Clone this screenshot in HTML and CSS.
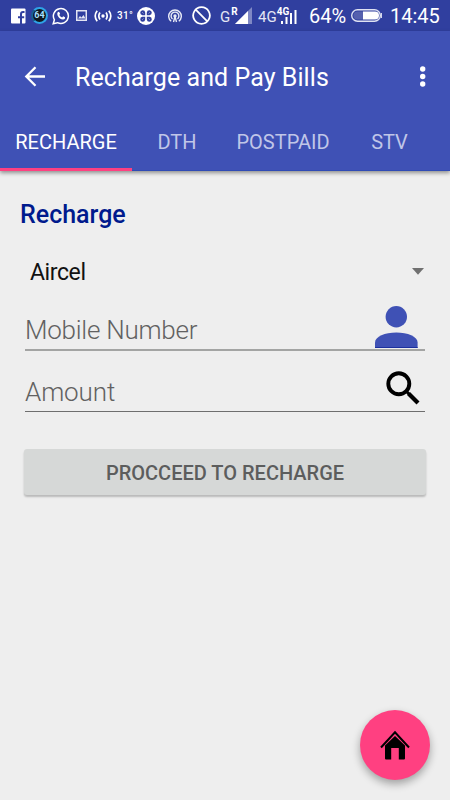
FILE: index.html
```html
<!DOCTYPE html>
<html lang="en">
<head>
    <meta charset="UTF-8">
    <meta name="viewport" content="width=device-width, initial-scale=1.0">
    <title>Recharge and Pay Bills</title>
    <link rel="stylesheet" href="styles.css">
</head>
<body>
    <div class="status-bar">
        <div class="notifications">
            <svg class="facebook" width="15" height="16" viewBox="0 0 15 16">
                <rect y="0.5" width="14.5" height="15" rx="1" fill="#fff"/>
                <path d="M13.5 4H12q-2 0-2 2v10M7 9.3h6.2" fill="none" stroke="#303f9f" stroke-width="2"/>
            </svg>
            <div class="level">64</div>
            <svg class="whatsapp" width="18" height="18" viewBox="0 0 18 18">
                <path d="M1.2 16.8l1.2-4A7.5 7.5 0 1 1 5.5 15.7z" fill="none" stroke="#fff" stroke-width="1.5"/>
                <path d="M5.7 5.2q1-1 1.6 0l.8 1.5-.8 1.2q.8 1.7 2.8 2.5l1.1-1.1 1.8 1q.5 2-2 2.3-3.5-.5-5.4-4.2-.8-2 .1-3.2z" fill="#fff"/>
            </svg>
            <svg class="picture" width="11" height="11" viewBox="0 0 11 11">
                <rect x="0.75" y="0.75" width="9.5" height="9.5" fill="none" stroke="#e3e5f3" stroke-width="1.5"/>
                <path d="M2 8.5l2-2.5 1.5 1.5L7.5 5 9.5 8.5z" fill="#e3e5f3"/>
            </svg>
            <svg class="broadcast" width="18" height="12" viewBox="0 0 18 12">
                <circle cx="9" cy="6" r="1.7" fill="#fff"/>
                <path d="M3.2.8q-4 5.2 0 10.4M6 2.5q-2.4 3.5 0 7M14.8.8q4 5.2 0 10.4M12 2.5q2.4 3.5 0 7" fill="none" stroke="#fff" stroke-width="1.7"/>
            </svg>
            <div class="temperature">31°</div>
            <svg class="clover" width="18" height="18" viewBox="0 0 18 18">
                <circle cx="9" cy="9" r="9" fill="#fff"/>
                <path d="M8.2 8.2H5.4A2.5 2.5 0 1 1 8.2 5.4zM9.8 8.2V5.4A2.5 2.5 0 1 1 12.6 8.2zM8.2 9.8v2.8A2.5 2.5 0 1 1 5.4 9.8zM9.8 9.8h2.8A2.5 2.5 0 1 1 9.8 12.6z" fill="#303f9f"/>
                <path d="M5.2 5.2l1.3 1.3M12.8 5.2l-1.3 1.3M5.2 12.8l1.3-1.3M12.8 12.8l-1.3-1.3" stroke="#8e97cd"/>
            </svg>
        </div>
        <svg class="hotspot" width="14" height="14" viewBox="0 0 14 14">
            <g fill="none" stroke="#e8eaf6" stroke-width="1.4">
                <path d="M3.2 12.3a6.3 6.3 0 1 1 7.6 0M4.5 10a3.9 3.9 0 1 1 5 0"/>
                <path d="M7 7.5L5.5 13M7 7.5L8.5 13"/>
            </g>
            <circle cx="7" cy="7" r="1.7" fill="#e8eaf6"/>
        </svg>
        <svg class="blocked" width="19" height="19" viewBox="0 0 19 19">
            <path d="M9.5 1.2a8.3 8.3 0 1 0 .01 0M3.7 3.7l11.6 11.6" fill="none" stroke="#fff" stroke-width="1.8"/>
        </svg>
        <div class="network">G<sup>R</sup></div>
        <svg class="signal" width="17" height="17" viewBox="0 0 17 17">
            <path d="M17 0v17H0z" fill="#7f88c4"/>
            <path d="M13 4v13H0z" fill="#fff"/>
        </svg>
        <div class="network network-4g">4G<sup>4G</sup></div>
        <svg class="bars" width="16" height="14" viewBox="0 0 16 14">
            <path d="M0 11h2v3H0zM4.5 7h2v7h-2zM9 3h2v11H9zM13.5 0h2v14h-2z" fill="#fff"/>
        </svg>
        <div class="percent">64%</div>
        <svg class="battery" width="31" height="13" viewBox="0 0 31 13">
            <rect x="0.7" y="0.7" width="28.6" height="11.6" rx="5.8" fill="none" stroke="#dfe2f2" stroke-width="1.4"/>
            <path d="M12 2.5h12a4 4 0 0 1 0 8H12z" fill="#fff"/>
            <path d="M12 2.5H6.5a4 4 0 0 0 0 8H12z" fill="#5560ae"/>
            <path d="M30.3 4v5" stroke="#fff"/>
        </svg>
        <div class="clock">14:45</div>
    </div>

    <header class="app-bar">
        <div class="toolbar">
            <svg class="back" width="22" height="22" viewBox="0 0 22 22">
                <path d="M21 10.5H2.5M11.5 1.3L2.3 10.5l9.2 9.2" fill="none" stroke="#fff" stroke-width="2.3"/>
            </svg>
            <h1 class="title">Recharge and Pay Bills</h1>
            <svg class="overflow" width="6" height="22" viewBox="0 0 6 22" fill="#fff">
                <circle cx="2.7" cy="3" r="2.7"/>
                <circle cx="2.7" cy="10.5" r="2.7"/>
                <circle cx="2.7" cy="18" r="2.7"/>
            </svg>
        </div>
        <nav class="tabs">
            <a class="tab tab-recharge active">RECHARGE</a>
            <a class="tab tab-dth">DTH</a>
            <a class="tab tab-postpaid">POSTPAID</a>
            <a class="tab tab-stv">STV</a>
        </nav>
    </header>

    <main class="content">
        <h2 class="heading">Recharge</h2>
        <div class="operator">
            <span>Aircel</span>
            <svg width="12" height="7" viewBox="0 0 12 7"><path d="M0 0h12L6 6.8z" fill="#707070"/></svg>
        </div>
        <div class="field field-mobile">
            <span class="hint hint-mobile">Mobile Number</span>
            <svg class="person" width="43" height="43" viewBox="0 0 43 43" fill="#3f51b5">
                <circle cx="21.3" cy="10.7" r="10.7"/>
                <path d="M0 42v-5.5C0 30.500 10 26.500 21.300 26.500s21.300 4 21.300 10v5.500z"/>
                <path d="M0 41h42.600v1H0z" fill="#1b309f"/>
            </svg>
        </div>
        <div class="field field-amount">
            <span class="hint hint-amount">Amount</span>
            <svg class="search" width="34" height="34" viewBox="0 0 34 34" fill="none" stroke="#000">
                <circle cx="12.8" cy="12.7" r="10.5" stroke-width="3.9"/>
                <path d="M20 20l3.500 3.500" stroke-width="3"/>
                <path d="M22.500 22.500l9.500 9.500" stroke-width="4.2"/>
            </svg>
        </div>
        <button class="submit">PROCCEED TO RECHARGE</button>
    </main>

    <button class="home">
        <svg width="30" height="30" viewBox="0 0 30 30">
            <path d="M1 17.5L15 2.3l14 15.2" fill="none" stroke="#000" stroke-width="2"/>
            <path d="M5 15.5L15 6l10 9.500v13q0 1-1 1h-5.200v-11.500h-7.600v11.500H6q-1 0-1-1z"/>
        </svg>
    </button>
</body>
</html>
```

FILE: styles.css
```css
* {
    box-sizing: border-box;
}
body {
    margin: 0;
    height: 800px;
    overflow: hidden;
    background-color: #eeeeee;
    font-family: Roboto, "Noto Sans", sans-serif;
}
svg {
    display: block;
    flex: none;
}

/* Status bar */
.status-bar {
    display: flex;
    align-items: center;
    height: 31px;
    padding-left: 11px;
    background-color: #303f9f;
    color: #fff;
    white-space: nowrap;
}
.notifications {
    display: flex;
    align-items: center;
    width: 157px;
    flex: none;
}
.level {
    width: 17px;
    height: 17px;
    margin: 0 4px 0 5px;
    border: 2px solid #2fa4e7;
    border-left-color: #176093;
    border-radius: 50%;
    background-color: #101820;
    font-size: 9px;
    font-weight: bold;
    line-height: 13px;
    text-align: center;
    color: #a8e0ff;
}
.picture {
    margin-left: 6px;
}
.broadcast {
    margin-left: 7px;
}
.temperature {
    width: 20px;
    margin-left: 5px;
    font-size: 10px;
    font-weight: 500;
    letter-spacing: 0.3px;
}
.hotspot {
    margin-right: 10px;
}
.network {
    display: flex;
    width: 15px;
    margin-left: 9px;
    font-size: 15px;
    line-height: 17px;
    color: #e4e6f4;
    padding-top: 3px;
}
.network sup {
    margin-top: -3px;
    margin-left: 1px;
    font-size: 10px;
    font-weight: bold;
    line-height: 12px;
    color: #fff;
}
.network-4g {
    width: 23px;
    margin-left: 6px;
}
.network-4g sup {
    margin-left: 0;
}
.bars {
    margin-top: 2px;
}
.percent {
    width: 42px;
    margin-left: 12px;
    font-size: 20px;
}
.clock {
    margin-left: 8px;
    font-size: 20px;
}

/* App bar */
.app-bar {
    height: 140px;
    background-color: #3f51b5;
    border-bottom: 1px solid #304bb5;
    box-shadow: 0 2px 4px rgba(0, 0, 0, 0.4);
}
.toolbar {
    display: flex;
    align-items: center;
    height: 91px;
    padding: 0 24px;
}
.title {
    flex: 1;
    margin: 1px 0 0 29px;
    font-size: 25px;
    font-weight: 400;
    letter-spacing: 0.07px;
    color: #fff;
}
.tabs {
    display: flex;
    height: 49px;
}
.tab {
    height: 49px;
    font-size: 20px;
    line-height: 40px;
    text-align: center;
    color: #c0c6e8;
}
.tab-recharge {
    width: 132px;
}
.tab-dth {
    width: 90px;
}
.tab-postpaid {
    width: 122px;
}
.tab-stv {
    width: 91px;
}
.active {
    color: #fff;
    border-bottom: 3px solid #ff4081;
}

/* Form */
.content {
    padding: 29px 25px 0;
}
.heading {
    margin: 0 0 0 -5px;
    font-size: 25px;
    font-weight: 500;
    line-height: 30px;
    color: #001a8d;
}
.operator {
    display: flex;
    justify-content: space-between;
    align-items: center;
    height: 30px;
    margin-top: 27px;
    padding: 0 1px 0 5px;
    font-size: 23px;
    letter-spacing: -0.4px;
    color: #111;
}
.operator svg {
    margin-top: -1px;
}
.field {
    display: flex;
    justify-content: space-between;
    color: #616161;
    font-size: 26px;
    font-weight: 300;
}
.field-mobile {
    height: 64px;
    padding: 19px 7px 0 0;
    border-bottom: 2px solid #a3a4a3;
}
.field-amount {
    height: 61px;
    padding: 20px 5px 0 0;
    border-bottom: 1px solid #6e6e6e;
}
.hint {
    line-height: 32px;
}
.hint-mobile {
    margin-top: 8px;
    letter-spacing: -0.25px;
}
.hint-amount {
    margin-top: 5px;
    letter-spacing: -0.1px;
}
.submit {
    display: block;
    width: 402px;
    height: 46px;
    margin: 37px 0 0 -1px;
    padding: 1px 0 0;
    border: 0;
    border-radius: 3px;
    background-color: #d6d8d7;
    box-shadow: 0 2px 2px rgba(0, 0, 0, 0.22);
    font-family: inherit;
    font-size: 20px;
    font-weight: 500;
    color: #5c5d5d;
}

/* Floating home button */
.home {
    position: absolute;
    right: 20px;
    bottom: 20px;
    display: flex;
    align-items: center;
    justify-content: center;
    width: 70px;
    height: 70px;
    padding: 0;
    border: 0;
    border-radius: 50%;
    background-color: #ff4081;
    box-shadow: 0 4px 8px rgba(0, 0, 0, 0.33);
}
```
